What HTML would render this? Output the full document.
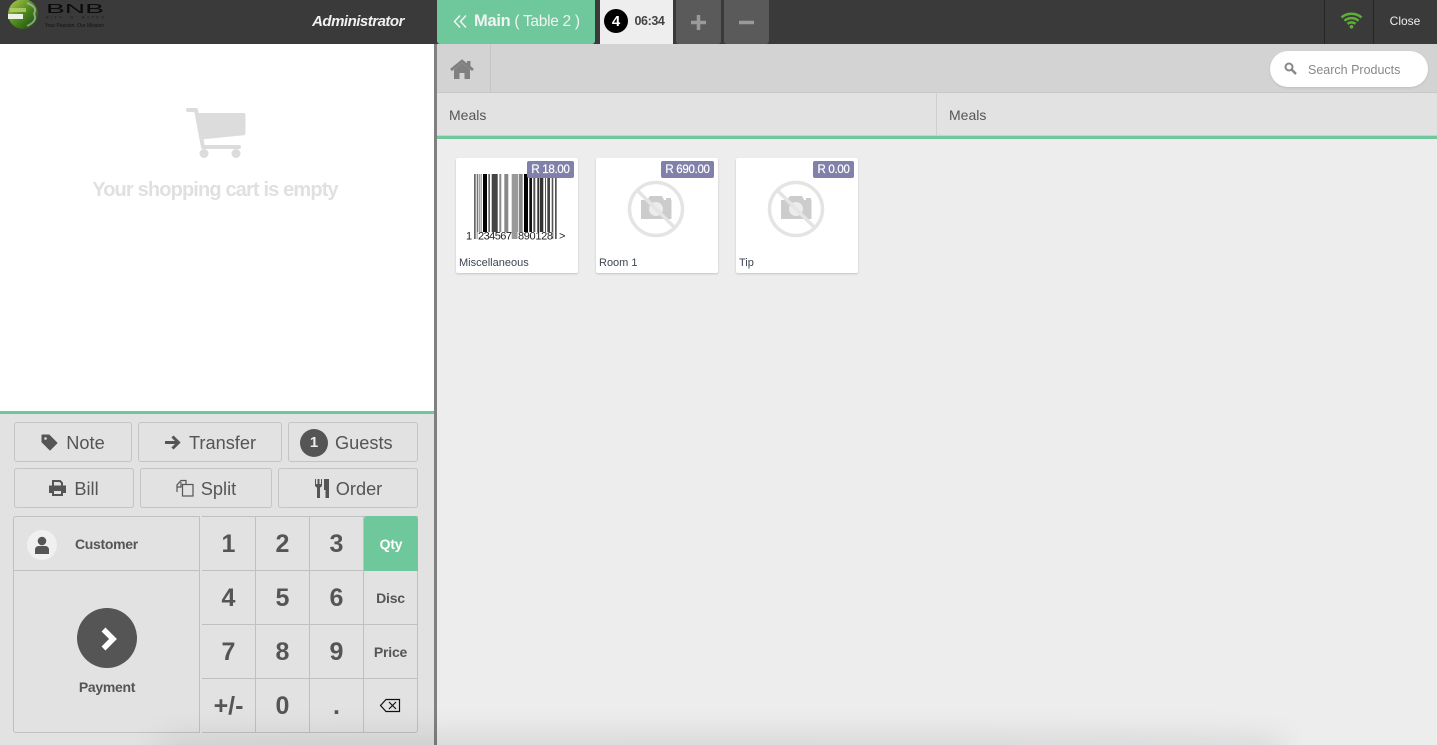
<!DOCTYPE html>
<html>
<head>
<meta charset="utf-8">
<style>
html,body{margin:0;padding:0;width:1437px;height:745px;overflow:hidden;background:#eeedee;font-family:"Liberation Sans",sans-serif;color:#555}
div,span{box-sizing:border-box}
.a{position:absolute}
.c{position:absolute;display:flex;align-items:center;justify-content:center;white-space:nowrap}
.btn{position:absolute;height:40px;border:1px solid #c4c4c4;border-radius:3px;display:flex;align-items:center;justify-content:center;font-size:18.200px;color:#555;white-space:nowrap;padding-top:2px}
.btn svg{margin-right:7px;margin-top:-2px}
.k{position:absolute;width:54px;height:54px;border-right:1px solid #c0c0c0;border-bottom:1px solid #c0c0c0;display:flex;align-items:center;justify-content:center;font-size:25px;font-weight:bold;color:#555;padding-top:2px}
.f{font-size:14px;padding-top:0;letter-spacing:-.2px}
.card{position:absolute;top:158px;width:122px;height:115px;background:#fff;box-shadow:0 1px 2px rgba(0,0,0,.18);border-radius:2px}
.tag{position:absolute;top:2.500px;height:17px;background:#8080ab;color:#fff;font-size:11.500px;border-radius:2px;display:flex;align-items:center;justify-content:center;white-space:nowrap;letter-spacing:-.3px;-webkit-text-stroke:.2px #fff;padding-top:1px}
.nm{position:absolute;left:3px;top:99px;font-size:11px;line-height:13px;color:#3c4552;white-space:nowrap}
</style>
</head>
<body>
<!-- header -->
<div class="a" style="left:0;top:0;width:1437px;height:44px;background:#3a3a3a"></div>
<!-- logo -->
<svg class="a" style="left:0;top:0" width="110" height="30" viewBox="0 0 110 30">
<defs><linearGradient id="g" x1="0" y1="0" x2="1" y2="1"><stop offset="0" stop-color="#b5cf55"/><stop offset=".5" stop-color="#4e8a1e"/><stop offset="1" stop-color="#123f10"/></linearGradient></defs>
<circle cx="23" cy="14" r="15" fill="url(#g)"/>
<rect x="10" y="8" width="16" height="4" fill="#b9d06a" opacity=".8"/>
<rect x="8" y="14" width="15" height="5" fill="#eef0e6"/>
<path d="M27 3 Q38 7 34 14 Q38 21 27 26" fill="none" stroke="#b8bab2" stroke-width="2" opacity=".7"/>
<text x="46" y="13" font-family="Liberation Sans" font-size="13" fill="#0c0c0c" textLength="58" lengthAdjust="spacingAndGlyphs">BNB</text>
<text x="46" y="18.500" font-family="Liberation Sans" font-size="4" fill="#1c1c1c" textLength="58">BITS 'N' BYTES</text>
<text x="45" y="27" font-family="Liberation Sans" font-size="5" fill="#111" textLength="59">Your Passion. Our Mission</text>
</svg>
<div class="c" style="left:300px;top:11px;width:116px;height:20px;color:#f0f0f0;font-size:15px;font-style:italic;font-weight:bold;letter-spacing:-.5px">Administrator</div>
<!-- main button -->
<div class="a" style="left:437px;top:0;width:158px;height:44px;background:#6ec89b;border-radius:0 0 3px 3px"></div>
<svg class="a" style="left:453px;top:14px" width="15" height="15" viewBox="0 0 15 15"><path d="M7 1.500 1.500 7.500 7 13.500M13 1.500 7.500 7.500 13 13.500" fill="none" stroke="#f2f2f2" stroke-width="1.500"/></svg>
<div class="a" style="left:474px;top:11px;height:20px;line-height:20px;color:#f2f2f2;font-size:15.500px;white-space:nowrap;letter-spacing:-.3px"><b style="font-size:16.500px">Main</b> ( Table 2 )</div>
<!-- tab -->
<div class="a" style="left:600px;top:0;width:73px;height:44px;background:#eee"></div>
<div class="c" style="left:604px;top:9px;width:24px;height:24px;border-radius:50%;background:#000;color:#fff;font-weight:bold;font-size:15px">4</div>
<div class="c" style="left:633px;top:12px;width:33px;height:18px;font-size:12.500px;font-weight:bold;color:#444;letter-spacing:-.4px">06:34</div>
<div class="a" style="left:676px;top:0;width:45px;height:44px;background:#5a5a5a;border-radius:0 0 3px 3px"></div>
<div class="a" style="left:724px;top:0;width:45px;height:44px;background:#5a5a5a;border-radius:0 0 3px 3px"></div>
<svg class="a" style="left:691px;top:15px" width="15" height="15"><path d="M0 7.500H15M7.500 0V15" stroke="#9a9a9a" stroke-width="3.500"/></svg>
<svg class="a" style="left:739px;top:15px" width="15" height="15"><path d="M0 7.500H15" stroke="#9a9a9a" stroke-width="3.500"/></svg>
<div class="a" style="left:1324px;top:0;width:1px;height:44px;background:#262626"></div>
<div class="a" style="left:1373px;top:0;width:1px;height:44px;background:#262626"></div>
<svg class="a" style="left:1340px;top:11px" width="23" height="18" viewBox="0 0 23 18">
<path d="M1.500 6.500C7 1.500 16 1.500 21.500 6.500M4.500 9.800C8.500 6.300 14.500 6.300 18.500 9.800M7.500 12.800C10 11 13 11 15.500 12.800" fill="none" stroke="#5fae35" stroke-width="2.500"/><circle cx="11.500" cy="15.800" r="1.800" fill="#5fae35"/></svg>
<div class="c" style="left:1380px;top:11px;width:50px;height:20px;color:#eee;font-size:12px">Close</div>

<!-- left panel -->
<div class="a" style="left:0;top:44px;width:434px;height:367px;background:#fff"></div>
<svg class="a" style="left:180px;top:104px" width="70" height="58" viewBox="180 104 70 58">
<path d="M188 110H196L203 147H239" fill="none" stroke="#dcdcdc" stroke-width="4" stroke-linecap="round" stroke-linejoin="round"/>
<path d="M197 113H243.500Q245.500 113 245.500 115V133Q245.500 135 243.500 135.200L201 139.500Z" fill="#dcdcdc"/>
<circle cx="204" cy="153.500" r="4.500" fill="#dcdcdc"/><circle cx="236" cy="153.500" r="4.500" fill="#dcdcdc"/>
</svg>
<div class="c" style="left:60px;top:178px;width:310px;height:24px;font-size:20px;font-weight:bold;color:#e0e0e0;letter-spacing:-.85px">Your shopping cart is empty</div>
<div class="a" style="left:0;top:411px;width:434px;height:3px;background:#6ec89b"></div>
<div class="a" style="left:0;top:414px;width:434px;height:331px;background:#e2e2e2"></div>
<div class="a" style="left:434px;top:44px;width:3px;height:701px;background:#808080"></div>

<div class="btn" style="left:14px;top:422px;width:118px"><svg width="17" height="17" viewBox="0 0 17 17" style="margin-right:8px"><path d="M1 1H8L16 9 9 16 1 8Z" fill="#555" stroke="#555" stroke-linejoin="round"/><circle cx="4.500" cy="4.500" r="1.300" fill="#e2e2e2"/></svg>Note</div>
<div class="btn" style="left:138px;top:422px;width:144px"><svg width="17" height="15" viewBox="0 0 17 15" style="margin-right:8px"><path d="M1 7.500H14M8.500 1.500 14.500 7.500 8.500 13.500" fill="none" stroke="#555" stroke-width="3"/></svg>Transfer</div>
<div class="btn" style="left:288px;top:422px;width:130px;padding-right:2px;justify-content:flex-start;padding-left:11px"><span style="width:28px;height:28px;border-radius:50%;background:#555;color:#eee;font-size:15px;font-weight:bold;display:flex;align-items:center;justify-content:center;margin-right:7px;margin-top:-1px">1</span>Guests</div>
<div class="btn" style="left:14px;top:468px;width:120px"><svg width="17" height="16" viewBox="0 0 17 16" style="margin-right:8px"><path d="M4 6V1H11L13 3V6M1 6.500H16V12H13V15H4V12H1Z" fill="none" stroke="#555" stroke-width="2"/><path d="M1 7H16V11H1Z" fill="#555"/></svg>Bill</div>
<div class="btn" style="left:140px;top:468px;width:132px"><svg width="18" height="18" viewBox="0 0 18 18"><path d="M1 13V6L5 1.500H10V5" fill="none" stroke="#555" stroke-width="1.200"/><path d="M1 8H5V3" fill="none" stroke="#555" stroke-width="1.200"/><rect x="6.500" y="5.500" width="10.500" height="11.500" fill="#e2e2e2" stroke="#555" stroke-width="1.200"/></svg>Split</div>
<div class="btn" style="left:278px;top:468px;width:140px"><svg width="15" height="19" viewBox="0 0 15 19"><path d="M1 0V6Q1 8 3 8.500V19H6V8.500Q8 8 8 6V0H7V5H5.500V0H3.500V5H2V0ZM10 0H15V19H11.500V11H10Z" fill="#555"/></svg>Order</div>

<!-- customer/payment -->
<div class="a" style="left:13px;top:516px;width:187px;height:217px;border:1px solid #c0c0c0;border-radius:3px 0 0 3px"></div>
<div class="a" style="left:14px;top:570px;width:185px;height:1px;background:#c0c0c0"></div>
<div class="a" style="left:27px;top:530px;width:30px;height:30px;border-radius:50%;background:#f0f0f0"></div>
<svg class="a" style="left:34px;top:535px" width="16" height="20" viewBox="0 0 16 20"><circle cx="8" cy="6" r="4.300" fill="#555"/><path d="M1 19V15Q1 11 5 11H11Q15 11 15 15V19Z" fill="#555"/></svg>
<div class="a" style="left:75px;top:535px;font-size:14px;font-weight:bold;color:#555;white-space:nowrap;letter-spacing:-.3px;line-height:18px">Customer</div>
<div class="a" style="left:77px;top:608px;width:60px;height:60px;border-radius:50%;background:#555"></div>
<svg class="a" style="left:98px;top:626px" width="22" height="26" viewBox="0 0 22 26"><path d="M3.500 3.500 13 13 3.500 22.500" transform="translate(2 0)" fill="none" stroke="#fff" stroke-width="5.500"/></svg>
<div class="c" style="left:60px;top:678px;width:94px;height:18px;font-size:14px;font-weight:bold;color:#555;letter-spacing:-.3px">Payment</div>

<!-- numpad -->
<div class="a" style="left:202px;top:516px;width:216px;height:1px;background:#c0c0c0"></div>
<div class="k" style="left:202px;top:517px">1</div>
<div class="k" style="left:256px;top:517px">2</div>
<div class="k" style="left:310px;top:517px">3</div>
<div class="k f" style="left:364px;background:#6ec89b;color:#fff;border:none;border-radius:3px 3px 0 0;top:516px;height:55px">Qty</div>
<div class="k" style="left:202px;top:571px">4</div>
<div class="k" style="left:256px;top:571px">5</div>
<div class="k" style="left:310px;top:571px">6</div>
<div class="k f" style="left:364px;top:571px">Disc</div>
<div class="k" style="left:202px;top:625px">7</div>
<div class="k" style="left:256px;top:625px">8</div>
<div class="k" style="left:310px;top:625px">9</div>
<div class="k f" style="left:364px;top:625px">Price</div>
<div class="k" style="left:202px;top:679px">+/-</div>
<div class="k" style="left:256px;top:679px">0</div>
<div class="k" style="left:310px;top:679px">.</div>
<div class="k" style="left:364px;top:679px;border-radius:0 0 3px 0"></div>
<svg class="a" style="left:379px;top:697px" width="23" height="18" viewBox="0 0 23 18"><path d="M7 2.500H20.500V14.500H7L1.500 8.500Z" fill="none" stroke="#111" stroke-width="1.200"/><path d="M10 5 17 12M17 5 10 12" stroke="#111" stroke-width="1.200"/></svg>

<!-- top bars -->
<div class="a" style="left:437px;top:44px;width:1000px;height:48px;background:#d3d3d3"></div>
<div class="a" style="left:490px;top:44px;width:1px;height:48px;background:#c4c4c4"></div>
<svg class="a" style="left:450px;top:59px" width="24" height="21" viewBox="0 0 24 21"><path d="M4 10.500 12 4 20 10.500V20H14.500V14H9.500V20H4Z" fill="#808080"/><path d="M1 11 12 2 23 11" fill="none" stroke="#808080" stroke-width="2.800"/><path d="M17 2H20.500V8H17Z" fill="#808080"/></svg>
<div class="a" style="left:1270px;top:51px;width:158px;height:36px;border-radius:18px;background:#fff;box-shadow:0 1px 2px rgba(0,0,0,.1)"></div>
<svg class="a" style="left:1284px;top:62px" width="13" height="13" viewBox="0 0 13 13"><circle cx="5" cy="5" r="3.500" fill="none" stroke="#888" stroke-width="2"/><path d="M7.800 7.800 12 12" stroke="#888" stroke-width="2.500"/></svg>
<div class="a" style="left:1308px;top:61px;font-size:12.500px;line-height:18px;color:#888;white-space:nowrap">Search Products</div>

<div class="a" style="left:437px;top:92px;width:1000px;height:44px;background:#e2e2e2;border-top:1px solid #c8c8c8;border-bottom:1px solid #cfcfcf"></div>
<div class="a" style="left:936px;top:93px;width:1px;height:42px;background:#cfcfcf"></div>
<div class="a" style="left:449px;top:106px;font-size:14px;line-height:18px;color:#555">Meals</div>
<div class="a" style="left:949px;top:106px;font-size:14px;line-height:18px;color:#555">Meals</div>
<div class="a" style="left:437px;top:136px;width:1000px;height:3px;background:#6ec89b"></div>

<!-- cards -->
<div class="card" style="left:456px">
<svg class="a" style="left:0;top:0" width="122" height="90" viewBox="456 158 122 90">
<rect x="474" y="174" width="1.700" height="65" fill="#666"/><rect x="476.700" y="174" width="1.300" height="65" fill="#777"/>
<rect x="478.700" y="174" width="1" height="58" fill="#777"/><rect x="480.700" y="174" width=".8" height="58" fill="#555"/>
<rect x="483" y="174" width="4" height="58" fill="#000"/><rect x="488.300" y="174" width="1.700" height="58" fill="#666"/>
<rect x="491.700" y="174" width="6" height="58" fill="#444"/><rect x="499.300" y="174" width="2" height="58" fill="#888"/>
<rect x="504.300" y="174" width="4" height="58" fill="#888"/><rect x="511.700" y="174" width="6.600" height="65" fill="#999"/>
<rect x="519" y="174" width="3.700" height="65" fill="#888"/><rect x="524" y="174" width="4" height="58" fill="#000"/>
<rect x="529.300" y="174" width="2.700" height="58" fill="#111"/><rect x="533.300" y="174" width="2" height="58" fill="#555"/>
<rect x="537.300" y="174" width="2" height="58" fill="#333"/><rect x="540" y="174" width="3.300" height="58" fill="#333"/>
<rect x="545" y="174" width="1" height="58" fill="#555"/><rect x="547.300" y="174" width="2.700" height="58" fill="#444"/>
<rect x="551.700" y="174" width="1.600" height="65" fill="#555"/><rect x="555" y="174" width="1.700" height="65" fill="#555"/>
<rect x="477.500" y="232" width="34" height="9" fill="#fff"/><rect x="517.500" y="232" width="35" height="9" fill="#fff"/>
<text x="466" y="239.500" font-family="Liberation Sans" font-size="11" fill="#222">1</text>
<text x="478" y="239.500" font-family="Liberation Sans" font-size="11" fill="#222" textLength="34">234567</text>
<text x="518" y="239.500" font-family="Liberation Sans" font-size="11" fill="#222" textLength="35">890128</text>
<text x="559" y="239.500" font-family="Liberation Sans" font-size="11" fill="#222">&gt;</text>
</svg>
<div class="tag" style="left:71px;width:47px">R 18.00</div>
<div class="nm">Miscellaneous</div>
</div>
<div class="card" style="left:596px">
<svg class="a" style="left:30px;top:22px" width="60" height="60" viewBox="0 0 60 60">
<path d="M15 20H21L24 16H36L38 20H40V18H45V20H45.500V39H15Z" fill="#cccccc"/><circle cx="30" cy="29" r="7" fill="#ececec"/>
<circle cx="30" cy="29" r="26.500" fill="none" stroke="#e4e4e4" stroke-width="3.500"/><path d="M11.500 10.500 48.500 47.500" stroke="#e4e4e4" stroke-width="3.500"/>
</svg>
<div class="tag" style="left:65px;width:53px">R 690.00</div>
<div class="nm">Room 1</div>
</div>
<div class="card" style="left:736px">
<svg class="a" style="left:30px;top:22px" width="60" height="60" viewBox="0 0 60 60">
<path d="M15 20H21L24 16H36L38 20H40V18H45V20H45.500V39H15Z" fill="#cccccc"/><circle cx="30" cy="29" r="7" fill="#ececec"/>
<circle cx="30" cy="29" r="26.500" fill="none" stroke="#e4e4e4" stroke-width="3.500"/><path d="M11.500 10.500 48.500 47.500" stroke="#e4e4e4" stroke-width="3.500"/>
</svg>
<div class="tag" style="left:77px;width:41px">R 0.00</div>
<div class="nm">Tip</div>
</div>

<!-- bottom soft shadow, clipped to the viewport -->
<div class="a" style="left:0;top:665px;width:1437px;height:80px;overflow:hidden">
<div class="a" style="left:175px;top:87px;width:1090px;height:4px;border-radius:50%;box-shadow:0 0 32px 18px rgba(0,0,0,.1)"></div>
</div>
</body>
</html>
